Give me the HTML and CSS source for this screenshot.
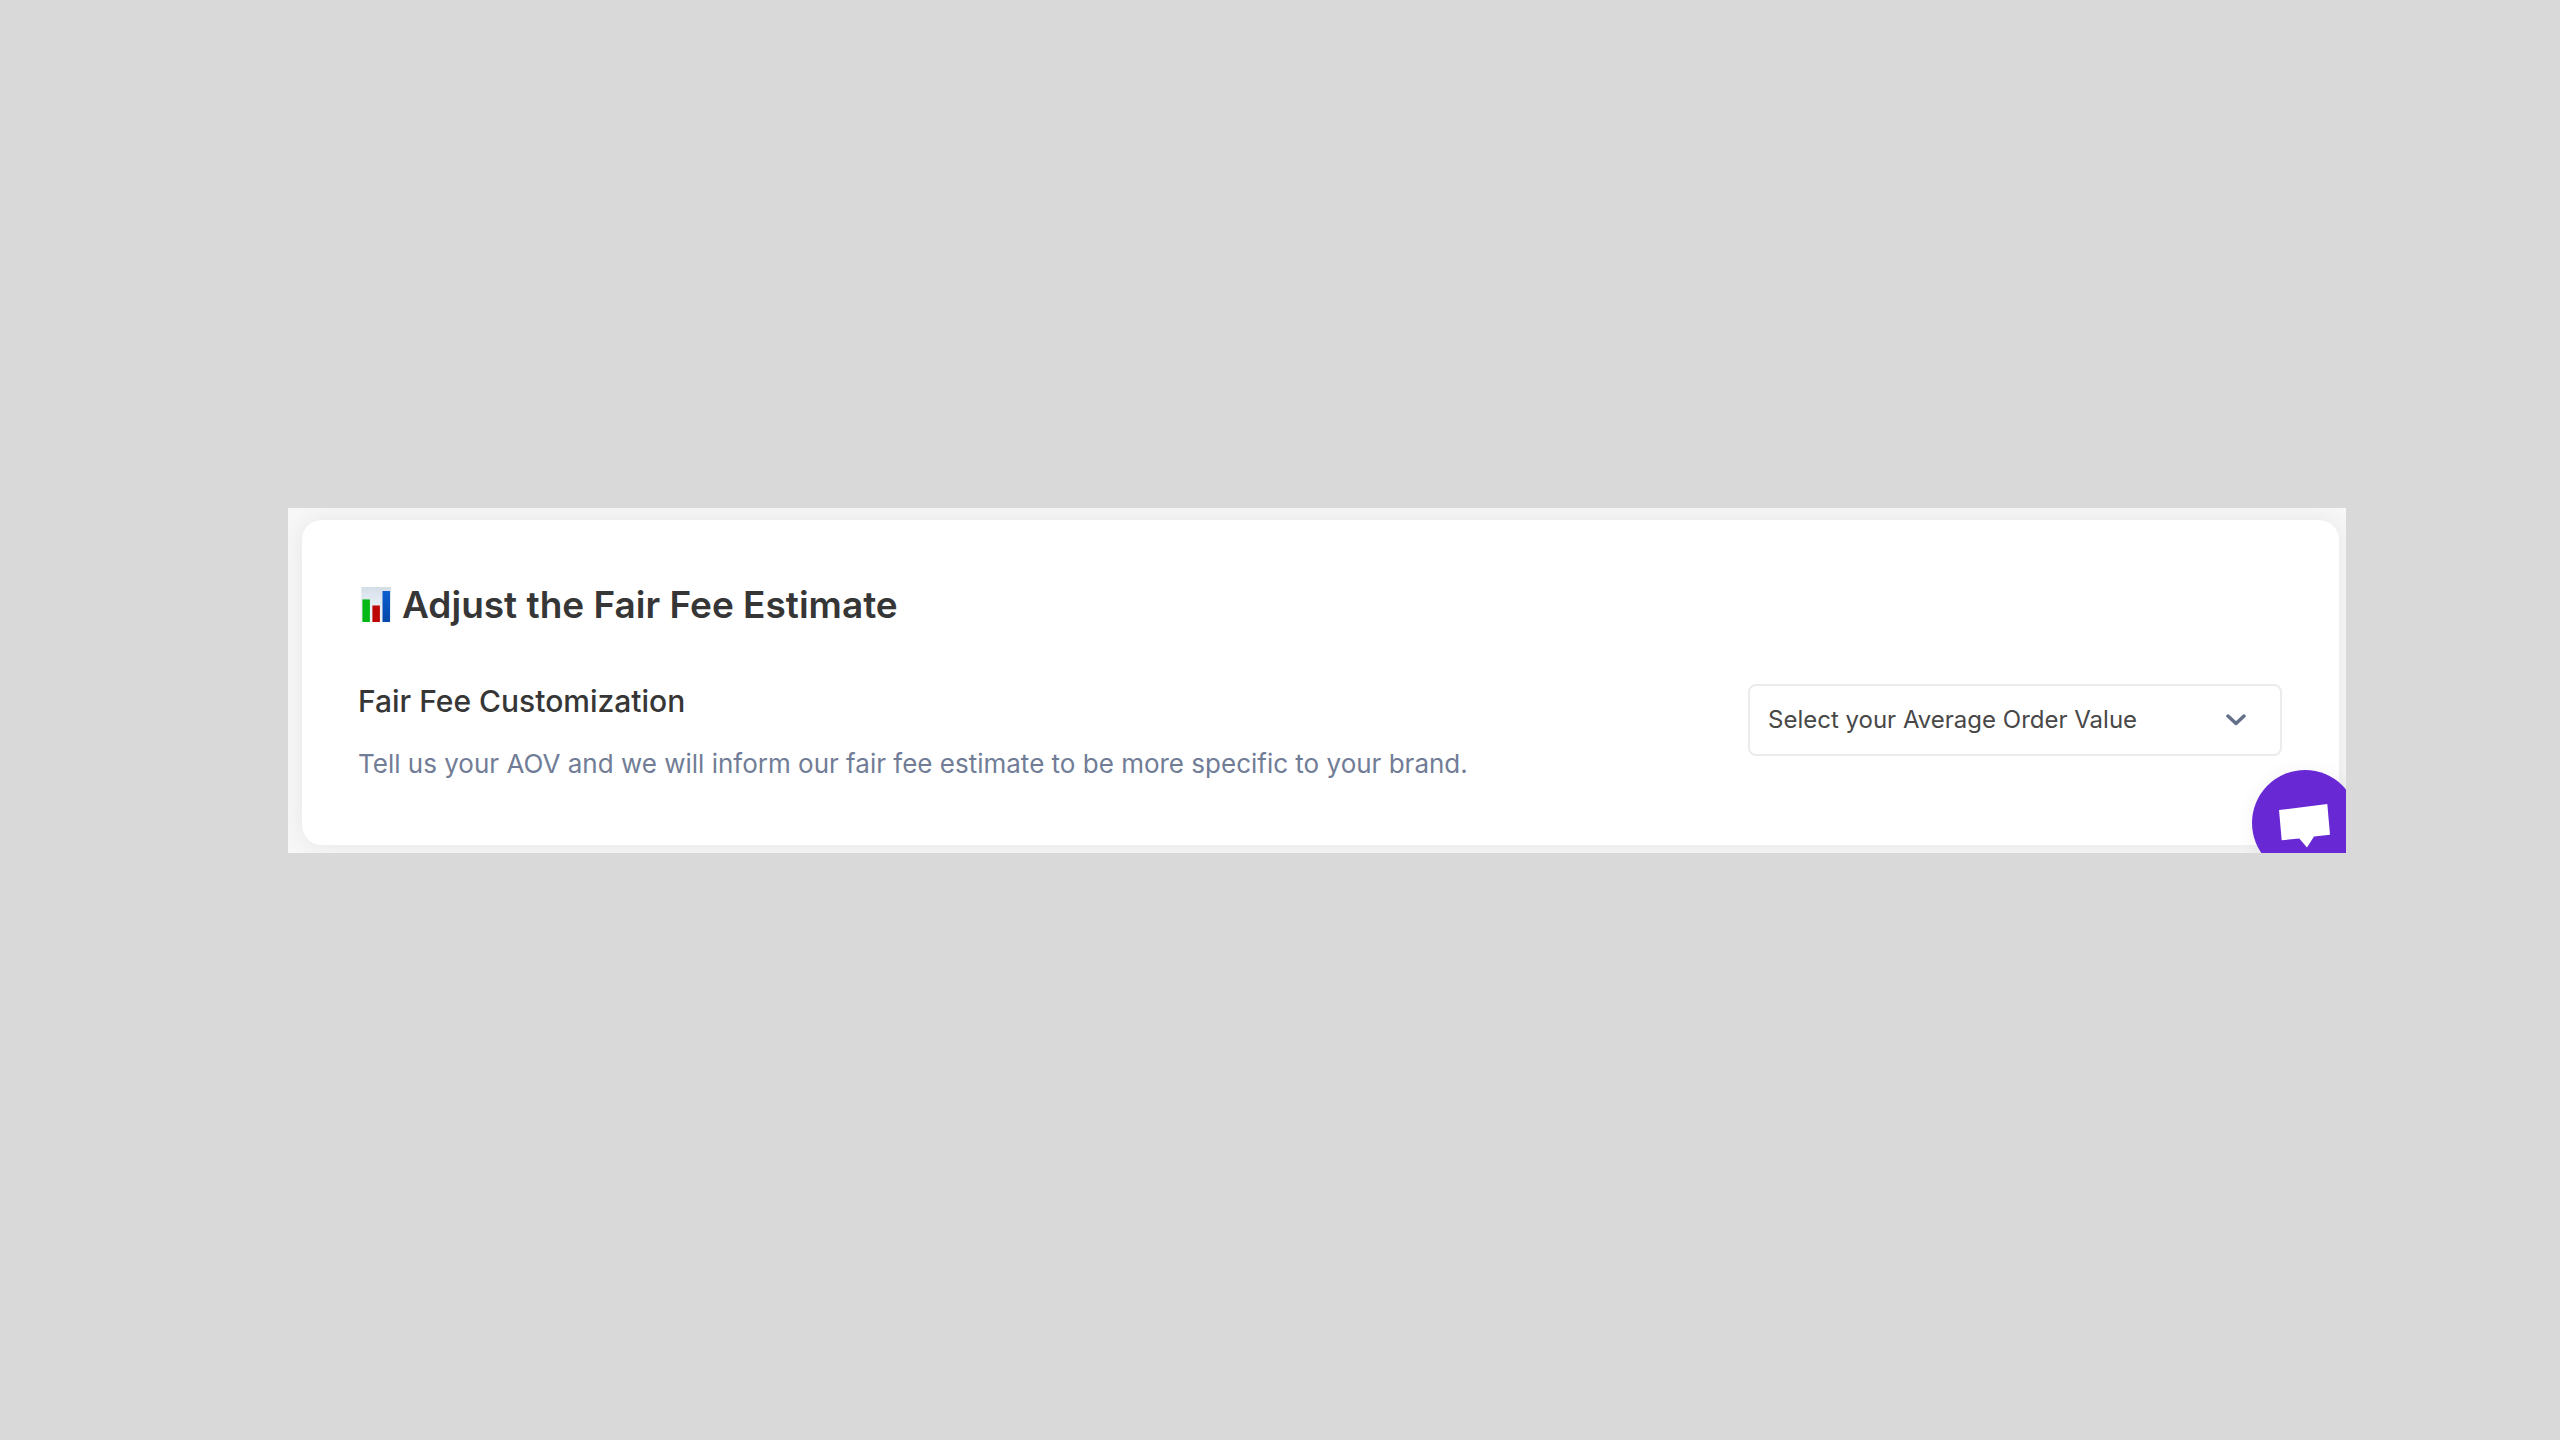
FILE: index.html
```html
<!DOCTYPE html>
<html lang="en">
<head>
<meta charset="utf-8">
<meta name="viewport" content="width=device-width, initial-scale=1">
<title>Adjust the Fair Fee Estimate</title>
<link rel="stylesheet" href="styles.css">
</head>
<body>
<main class="panel">
  <section class="card">
    <h1 class="title">
      <svg class="title-icon" viewBox="0 0 33 36" aria-hidden="true">
        <defs>
          <linearGradient id="paper" x1="0" y1="0" x2="0" y2="1"><stop offset="0" stop-color="#d3dde6"/><stop offset=".2" stop-color="#dde6ef"/><stop offset="1" stop-color="#f1f5f9"/></linearGradient>
          <linearGradient id="blue" x1="0" y1="0" x2="0" y2="1"><stop offset="0" stop-color="#0a5fd0"/><stop offset="1" stop-color="#0549a8"/></linearGradient>
        </defs>
        <rect x="3.3" y="0" width="29.7" height="35.3" fill="url(#paper)"/>
        <rect x="4.4" y="12.4" width="7.5" height="22.6" fill="#06b815"/>
        <rect x="14.4" y="18.5" width="7.5" height="16.5" fill="#bd0505"/>
        <rect x="24.5" y="4" width="7.5" height="31" fill="url(#blue)"/>
      </svg>
      <span>Adjust the Fair Fee Estimate</span>
    </h1>
    <div class="setting">
      <div class="setting-text">
        <h2 class="subtitle"><label for="aov">Fair Fee Customization</label></h2>
        <p class="description">Tell us your AOV and we will inform our fair fee estimate to be more specific to your brand.</p>
      </div>
      <div class="select-wrap">
        <select class="select" id="aov">
          <option>Select your Average Order Value</option>
        </select>
        <svg class="chevron" viewBox="0 0 20 12" aria-hidden="true"><path d="M2 2l8 7.500 8-7.500" fill="none" stroke="#64708a" stroke-width="3.500" stroke-linecap="round" stroke-linejoin="round"/></svg>
      </div>
    </div>
  </section>
  <button class="chat" type="button" aria-label="Open chat">
    <svg class="chat-icon" viewBox="0 0 106 106" aria-hidden="true"><path d="M27 40L75.300 34L78 64.700L62 66.500L55 77.500L47.300 68.500L29.700 70.300Z" fill="#fff"/></svg>
  </button>
</main>
</body>
</html>
```
FILE: styles.css
```css
* {
  box-sizing: border-box;
}

body {
  margin: 0;
  padding: 508px 214px 0 288px;
  background: #d9d9d9;
  color: #363636;
  font-family: Inter, "Open Sans", sans-serif;
}

.panel {
  position: relative;
  overflow: hidden;
  padding: 12px 7px 8px 14px;
  background: #f7f7f7;
}

.card {
  padding: 61px 57px 61px 56px;
  border-radius: 20px;
  background: #fff;
  box-shadow: 0 0 24px rgba(0, 0, 0, 0.07);
}

.title {
  display: flex;
  align-items: center;
  gap: 11px;
  margin: 0 0 52px;
  font-size: 37px;
  font-weight: 600;
  line-height: 48px;
}

.title-icon {
  width: 33px;
  height: 36px;
}

.setting {
  display: flex;
  align-items: flex-start;
  justify-content: space-between;
  gap: 48px;
}

.subtitle {
  margin: 0 0 23px;
  font-size: 30px;
  font-weight: 500;
  line-height: 40px;
}

.description {
  margin: 0;
  color: #717d96;
  font-size: 26px;
  line-height: 40px;
}

.select-wrap {
  position: relative;
  flex: 0 0 534px;
  margin-top: 3px;
}

.select {
  display: block;
  width: 100%;
  height: 72px;
  padding: 0 72px 2px 18px;
  border: 2px solid #ebebeb;
  border-radius: 8px;
  appearance: none;
  background: #fff;
  color: #484848;
  font-family: inherit;
  font-size: 24px;
}

.chevron {
  position: absolute;
  top: 30px;
  right: 36px;
  width: 20px;
  height: 12px;
  pointer-events: none;
}

.chat {
  position: absolute;
  top: 262px;
  right: -12px;
  width: 106px;
  height: 106px;
  padding: 0;
  border: 0;
  border-radius: 50%;
  background: #6829d4;
  box-shadow: 0 2px 20px rgba(0, 0, 0, 0.06);
}

.chat-icon {
  display: block;
  width: 100%;
  height: 100%;
}
```
